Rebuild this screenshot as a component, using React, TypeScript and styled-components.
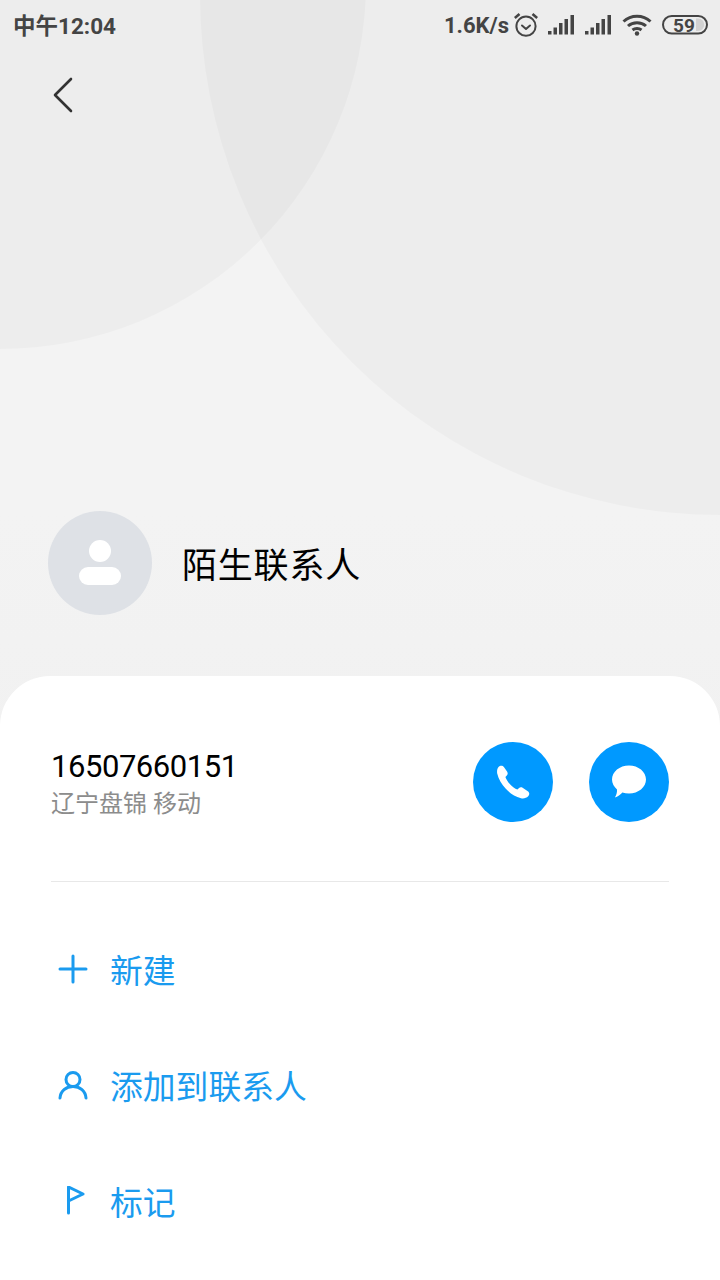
import React from 'react';
import styled, { createGlobalStyle } from 'styled-components';

const GlobalStyle = createGlobalStyle`
    html, body {
        margin: 0;
        padding: 0;
        background: #ffffff;
    }
    * {
        box-sizing: border-box;
    }
`;

const Page = styled.div`
    position: relative;
    width: 720px;
    height: 1280px;
    overflow: hidden;
    display: flex;
    flex-direction: column;
    background: linear-gradient(180deg, #f3f3f3 0%, #f3f3f3 40%, #f1f1f1 60%, #f1f1f1 100%);
    font-family: Roboto, 'Noto Sans CJK SC', sans-serif;
`;

const Circle = styled.div<{ $size: number; $left: number; $top: number }>`
    position: absolute;
    left: ${(p) => p.$left}px;
    top: ${(p) => p.$top}px;
    width: ${(p) => p.$size}px;
    height: ${(p) => p.$size}px;
    border-radius: 50%;
    background: rgba(0, 0, 0, 0.024);
`;

const StatusBar = styled.div`
    position: relative;
    height: 52px;
    padding: 0 12px 3px 13px;
    display: flex;
    align-items: center;
    justify-content: space-between;
    color: #444444;
    font-weight: 700;
    font-size: 22px;
    line-height: 26px;
`;

const Clock = styled.span`
    font-size: 22.5px;
    padding-top: 3px;
`;

const StatusRight = styled.div`
    display: flex;
    align-items: center;
`;

const Speed = styled.span`
    margin-right: 5px;
    padding-top: 3px;
`;

const StatusIcon = styled.svg<{ $gap?: number }>`
    display: block;
    margin-right: ${(p) => p.$gap ?? 0}px;
`;

const BackRow = styled.div`
    position: relative;
    height: 84px;
    padding: 25px 0 0 52px;
`;

const ContactHeader = styled.div`
    position: relative;
    margin-top: 375px;
    padding-left: 48px;
    display: flex;
    align-items: center;
    gap: 30px;
`;

const Avatar = styled.div`
    width: 104px;
    height: 104px;
    border-radius: 50%;
    background: #dee1e6;
    display: flex;
    align-items: center;
    justify-content: center;
`;

const ContactName = styled.div`
    font-size: 35px;
    line-height: 50px;
    color: #000000;
    letter-spacing: 0.8px;
    margin-top: 7px;
`;

const Sheet = styled.div`
    position: relative;
    margin-top: 61px;
    flex: 1;
    background: #ffffff;
    border-radius: 50px 50px 0 0;
    padding: 66px 51px 0;
`;

const NumberRow = styled.div`
    display: flex;
    align-items: center;
    justify-content: space-between;
    height: 80px;
`;

const NumberInfo = styled.div`
    display: flex;
    flex-direction: column;
    padding-top: 3px;
`;

const PhoneNumber = styled.div`
    font-size: 31px;
    line-height: 40px;
    color: #000000;
    letter-spacing: -0.45px;
`;

const Location = styled.div`
    margin-top: 1px;
    font-size: 24px;
    line-height: 32px;
    color: #8c8c8c;
`;

const RoundActions = styled.div`
    display: flex;
    gap: 36px;
`;

const RoundButton = styled.div`
    width: 80px;
    height: 80px;
    border-radius: 50%;
    background: #0099ff;
    display: flex;
    align-items: center;
    justify-content: center;
`;

const Divider = styled.div`
    height: 1px;
    background: #e8e8e8;
    margin-top: 59px;
`;

const ActionList = styled.div`
    margin-top: 28px;
    display: flex;
    flex-direction: column;
`;

const ActionRow = styled.div`
    height: 116px;
    display: flex;
    align-items: center;
    gap: 15px;
    color: #1a9bef;
    font-size: 32.8px;
`;

const ActionIcon = styled.div`
    width: 44px;
    height: 44px;
    margin-top: 2px;
    display: flex;
    align-items: center;
    justify-content: center;
`;

const Signal: React.FC<{ gap: number }> = ({ gap }) => (
    <StatusIcon $gap={gap} width="27" height="20" viewBox="0 0 27 20" fill="#444444">
        <rect x="0" y="16" width="3.5" height="3.5" />
        <rect x="5.5" y="12.5" width="3.5" height="7" />
        <rect x="11" y="8" width="3.5" height="11.5" />
        <rect x="16.5" y="4" width="3.5" height="15.5" />
        <rect x="22.5" y="0" width="3.5" height="19.5" />
    </StatusIcon>
);

export default function App() {
    return (
        <Page>
            <GlobalStyle />
            <Circle $size={732} $left={-366} $top={-383} />
            <Circle $size={1040} $left={200} $top={-525} />
            <StatusBar>
                <Clock>中午12:04</Clock>
                <StatusRight>
                    <Speed>1.6K/s</Speed>
                    <StatusIcon $gap={10} width="24" height="24" viewBox="0 0 24 24" fill="none" stroke="#444444" strokeWidth="2">
                        <circle cx="12" cy="13.2" r="9.6" />
                        <path d="M8 12.5 L12 16 L16 12.5" strokeLinecap="round" strokeLinejoin="round" />
                        <path d="M0.8 5 L5.5 1 M23.2 5 L18.5 1" strokeWidth="2.6" />
                    </StatusIcon>
                    <Signal gap={10} />
                    <Signal gap={10} />
                    <StatusIcon $gap={10} width="30" height="22" viewBox="0 0 30 22" fill="none" stroke="#444444" strokeWidth="3">
                        <path d="M1.5 7.5 C9 0.5 21 0.5 28.5 7.5" />
                        <path d="M6 12 C11 7.5 19 7.5 24 12" />
                        <path d="M10.5 16 C13 14 17 14 19.5 16" />
                        <circle cx="15" cy="19.5" r="2.2" fill="#444444" stroke="none" />
                    </StatusIcon>
                    <StatusIcon width="46" height="20" viewBox="0 0 46 20">
                        <rect x="1" y="1" width="44" height="17.5" rx="8.75" fill="none" stroke="#444444" strokeWidth="2" />
                        <path d="M34 3.5 H36 A6.25 6.25 0 0 1 36 16 H34 Z" fill="#d2d2d2" />
                        <text x="22" y="16.5" textAnchor="middle" fontSize="19" fontWeight="700" fill="#444444" fontFamily="Roboto, sans-serif">59</text>
                    </StatusIcon>
                </StatusRight>
            </StatusBar>
            <BackRow>
                <svg width="22" height="36" viewBox="0 0 22 36" fill="none" stroke="#333333" strokeWidth="2.6" strokeLinecap="round" strokeLinejoin="round">
                    <path d="M19 2 L3 18 L19 34" />
                </svg>
            </BackRow>
            <ContactHeader>
                <Avatar>
                    <svg width="44" height="46" viewBox="0 0 44 46" fill="#ffffff">
                        <circle cx="22" cy="11" r="11" />
                        <rect x="1" y="27" width="42" height="18" rx="9" />
                    </svg>
                </Avatar>
                <ContactName>陌生联系人</ContactName>
            </ContactHeader>
            <Sheet>
                <NumberRow>
                    <NumberInfo>
                        <PhoneNumber>16507660151</PhoneNumber>
                        <Location>辽宁盘锦 移动</Location>
                    </NumberInfo>
                    <RoundActions>
                        <RoundButton>
                            <svg width="36" height="36" viewBox="0 0 36 36" fill="#ffffff">
                                <path d="M3.5 3 C5 1.2 7.6 1.2 8.9 3 L12.2 7.8 C13 9.2 12.8 10.6 11.8 11.6 L10.4 13 C11.2 15.4 12.8 17.8 15 20.2 C17.4 22.8 19.8 24.6 22.4 25.6 L23.8 24.2 C24.8 23.2 26.4 23 27.6 23.8 L32.8 27.2 C34.6 28.4 34.8 30.8 33.2 32.2 C31.4 34 28.8 34.8 26 34.2 C20 32.8 15 29.4 10.8 24.8 C6.6 20.2 3.4 15.2 2.2 9.6 C1.8 7 2.2 4.6 3.5 3 Z" />
                            </svg>
                        </RoundButton>
                        <RoundButton>
                            <svg width="36" height="36" viewBox="0 0 36 36" fill="#ffffff">
                                <path d="M18 1.5 C27.4 1.5 35 7.8 35 15.5 C35 23.2 27.4 29.5 18 29.5 C15.6 29.5 13.4 29.1 11.4 28.4 C9.6 30.4 6.6 33 3.8 33.4 C5.4 31 6.2 28.4 6 25.4 C3 22.8 1 19.4 1 15.5 C1 7.8 8.6 1.5 18 1.5 Z" />
                            </svg>
                        </RoundButton>
                    </RoundActions>
                </NumberRow>
                <Divider />
                <ActionList>
                    <ActionRow>
                        <ActionIcon>
                            <svg width="30" height="30" viewBox="0 0 30 30" fill="none" stroke="#1a9bef" strokeWidth="3" strokeLinecap="round">
                                <path d="M15 2 V28 M2 15 H28" />
                            </svg>
                        </ActionIcon>
                        新建
                    </ActionRow>
                    <ActionRow>
                        <ActionIcon>
                            <svg width="30" height="30" viewBox="0 0 30 30" fill="none" stroke="#1a9bef" strokeWidth="3" strokeLinecap="round">
                                <circle cx="15" cy="9.5" r="7" />
                                <path d="M2 28 C2.5 21 8 16.5 15 16.5 C22 16.5 27.5 21 28 28" />
                            </svg>
                        </ActionIcon>
                        添加到联系人
                    </ActionRow>
                    <ActionRow>
                        <ActionIcon>
                            <svg width="30" height="30" viewBox="0 0 30 30" fill="none" stroke="#1a9bef" strokeWidth="3" strokeLinecap="round" strokeLinejoin="round">
                                <path d="M10.5 27 V1 L25 8 L10.5 15" />
                            </svg>
                        </ActionIcon>
                        标记
                    </ActionRow>
                </ActionList>
            </Sheet>
        </Page>
    );
}
